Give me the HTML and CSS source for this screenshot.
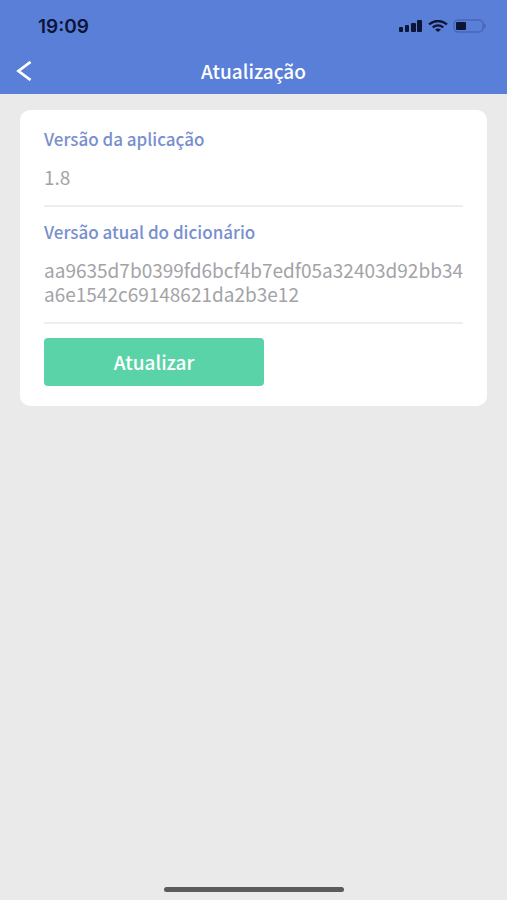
FILE: index.html
```html
<!DOCTYPE html>
<html lang="pt">
<head>
    <meta charset="UTF-8">
    <meta name="viewport" content="width=device-width, initial-scale=1.0">
    <title>Atualização</title>
    <link rel="stylesheet" href="styles.css">
</head>
<body>
    <header class="header">
        <div class="status-bar">
            <span class="time">19:09</span>
            <div class="status-icons">
                <svg class="signal" width="24" height="12" viewBox="0 0 24 12">
                    <rect x="0" y="7" width="4" height="5" rx="1"/>
                    <rect x="6" y="5" width="4" height="7" rx="1"/>
                    <rect x="12" y="3" width="5" height="9" rx="1"/>
                    <rect x="18" y="0" width="5" height="12" rx="1"/>
                </svg>
                <svg class="wifi" width="20" height="12" viewBox="0 0 20 12">
                    <path d="M1 4.4Q10-2.4 19 4.4" fill="none" stroke="currentColor" stroke-width="2.4"/>
                    <path d="M4.700 7.400Q10 3.200 15.300 7.400" fill="none" stroke="currentColor" stroke-width="2.200"/>
                    <path d="M7 9.600Q10 7.400 13 9.600L10 12Z"/>
                </svg>
                <svg class="battery" width="34" height="14" viewBox="0 0 34 14">
                    <rect x="1" y="1" width="29" height="12" rx="4" fill="none" stroke="#4a67b5" stroke-width="1.500"/>
                    <rect x="3" y="3" width="10" height="8" rx="1"/>
                    <path d="M31 4.500Q35 7 31 9.500Z" fill="#4a67b5"/>
                </svg>
            </div>
        </div>
        <nav class="nav-bar">
            <button class="back" type="button" aria-label="Voltar">
                <svg width="16" height="20" viewBox="0 0 16 20">
                    <path d="M14.500 1L2.500 10L14.500 19" fill="none" stroke="currentColor" stroke-width="2.800"/>
                </svg>
            </button>
            <h1 class="title">Atualização</h1>
        </nav>
    </header>

    <main class="content">
        <section class="card">
            <div class="field">
                <h2 class="label">Versão da aplicação</h2>
                <p class="value">1.8</p>
            </div>
            <div class="field">
                <h2 class="label">Versão atual do dicionário</h2>
                <p class="value">aa9635d7b0399fd6bcf4b7edf05a32403d92bb34a6e1542c69148621da2b3e12</p>
            </div>
            <button class="update" type="button">Atualizar</button>
        </section>
    </main>

    <footer class="footer">
        <div class="home-indicator"></div>
    </footer>
</body>
</html>
```
FILE: styles.css
```css
* {
    box-sizing: border-box;
}
body {
    display: flex;
    flex-direction: column;
    min-height: 100vh;
    margin: 0;
    background-color: #eaeaea;
    font-family: "Noto Sans CJK SC", "Noto Sans", sans-serif;
}
h1, h2, p {
    margin: 0;
}
.header {
    background-color: #5a7fd8;
}
.status-bar {
    display: flex;
    align-items: center;
    justify-content: space-between;
    height: 52px;
    padding: 0 20px 0 38px;
    color: #0c1536;
}
.time {
    font-family: Inter, sans-serif;
    font-size: 19px;
    font-weight: 600;
}
.status-icons {
    display: flex;
    align-items: center;
    gap: 5px;
}
.status-icons svg {
    fill: currentColor;
}
.nav-bar {
    display: grid;
    grid-template-columns: 48px 1fr 48px;
    align-items: center;
    height: 42px;
    padding-bottom: 5px;
    color: #fff;
}
.back {
    display: flex;
    justify-content: center;
    padding: 0;
    border: none;
    background: none;
    color: inherit;
    cursor: pointer;
}
.title {
    font-size: 19px;
    font-weight: 500;
    line-height: 24px;
    text-align: center;
}
.content {
    flex: 1;
    padding: 16px 20px;
}
.card {
    padding: 18px 24px 20px;
    border-radius: 10px;
    background-color: #fff;
}
.field {
    padding-bottom: 16px;
    border-bottom: 2px solid #eeeeef;
    margin-bottom: 14px;
}
.label {
    margin-bottom: 15px;
    color: #788fce;
    font-size: 17px;
    font-weight: 500;
    line-height: 22px;
}
.value {
    color: #a3a3a8;
    font-size: 19px;
    font-weight: 400;
    line-height: 24px;
    overflow-wrap: anywhere;
}
.update {
    display: block;
    width: 220px;
    max-width: 100%;
    height: 48px;
    padding: 0 0 2px;
    border: none;
    border-radius: 4px;
    background-color: #5bd3a8;
    color: #fff;
    font-family: inherit;
    font-size: 19px;
    font-weight: 500;
    cursor: pointer;
}
.footer {
    display: flex;
    justify-content: center;
    padding-bottom: 8px;
}
.home-indicator {
    width: 180px;
    height: 5px;
    border-radius: 3px;
    background-color: #5b5b5b;
}
```
